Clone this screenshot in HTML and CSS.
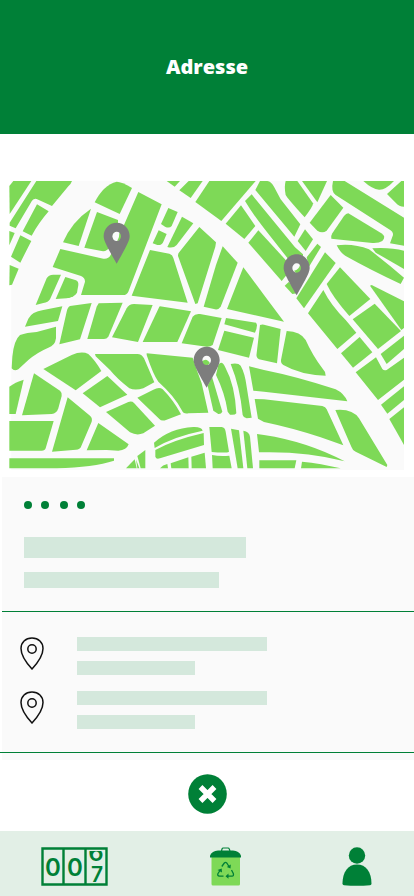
FILE: index.html
```html
<!DOCTYPE html>
<html lang="de">
<head>
<meta charset="utf-8">
<meta name="viewport" content="width=device-width, initial-scale=1">
<title>Adresse</title>
<link rel="stylesheet" href="styles.css">
</head>
<body>
<header class="header"><h1 class="title">Adresse</h1></header>
<main class="main">
<svg class="map" viewBox="27 30 1188 870" role="img" aria-label="Map">
<defs><path id="pin" fill-rule="evenodd" d="M0 -40C-22 -40 -39 -22 -39 0C-39 14 -30 30 0 83C30 30 39 14 39 0C39 -22 22 -40 0 -40ZM0 -13A13 14 0 1 1 0 15A13 14 0 1 1 0 -13Z"/></defs>
<path class="ground" d="M34 32H1212V900H34Z"/>
<g class="blocks">
<g>
<path d="M28 48L40 33H94L29 132Z"/>
<path d="M109 33H216Q213 42 205 49L156 108L110 87Q100 84 95 94L47 175L29 167V158Z"/>
<path d="M111 103L146 124Q115 160 95 197L68 184Z"/>
<path d="M28 183L44 189L28 226Z"/>
<path d="M61 196L94 213Q75 250 61 278L33 260Z"/>
<path d="M29 285L56 296L36 344L28 346Z"/>
<path d="M284 97Q310 45 350 35Q365 35 396 54L359 132Z"/>
<path d="M189 217Q215 155 273 116L236 228Z"/>
<path d="M291 126L354 150V165L330 230Q320 246 305 243L253 233Z"/>
<path d="M415 66L485 103L385 365Q380 375 370 375H243L255 335Q255 323 243 318L158 291L181 237L310 266Q325 268 332 255L372 165Z"/>
<path d="M107 405L140 325Q145 315 160 314H183L150 388Q145 397 130 399Z"/>
<path d="M196 321L228 331Q236 335 235 345L231 368Q225 380 200 385L167 387Z"/>
<path d="M85 446Q95 425 130 420L187 409L174 453L75 470Z"/>
<path d="M210 408L275 399L240 508L178 523L200 425Q203 411 210 408Z"/>
<path d="M296 400L368 398L325 500Q320 507 312 507H262L290 410Z"/>
<path d="M458 405L414 516L336 502L380 415Q387 402 402 402Z"/>
</g>
<g transform="translate(390 0)">
<path d="M110 33H150L134 50Z"/>
<path d="M176 33H218L182 84L148 61Z"/>
<path d="M238 33H377L274 153L196 96Z"/>
<path d="M333 106L376 168L343 207L287 161Z"/>
<path d="M115 114L143 126L125 168Q118 176 105 170L93 162Z"/>
<path d="M86 181L110 192L100 215Q95 227 82 225L68 220Z"/>
<path d="M156 140L190 160L140 225Q130 236 112 231Z"/>
<path d="M208 171L258 217L256 230L203 400L196 402L144 258Q143 250 150 244Z"/>
<path d="M278 229L323 278L272 410Q265 420 255 418L221 410L258 285Z"/>
<path d="M340 292Q380 345 402 375L462 455L291 417Z"/>
<path d="M60 240L118 251Q127 254 130 264L173 398L5 377Z"/>
<path d="M90 409L183 424L142 516H38L88 410Z"/>
<path d="M188 440Q195 430 210 432L275 444L248 525Q240 531 230 530L155 520Z"/>
<path d="M288 444L378 458Q385 465 375 488L283 463Z"/>
</g>
<g transform="translate(792 0)">
<path d="M-12 33H10Q22 35 30 50L50 88L109 163L91 200L-26 60Z"/>
<path d="M-37 73L93 232L117 253V280L75 270L0 175Q-35 130 -57 93Z"/>
<path d="M-17 181L67 272V316L53 333L-47 218Z"/>
<path d="M65 33H100L147 100Q148 108 122 142Q70 85 65 75Q60 50 65 33Z"/>
<path d="M114 33H189L160 97Z"/>
<path d="M207 33H242L420 143V227L378 220L387 195Q388 185 375 178L215 75Q200 65 207 33Z"/>
<path d="M298 33H390Q365 60 345 59Q325 58 298 33Z"/>
<path d="M420 33V110Q405 110 395 98L369 72L412 33Z"/>
<path d="M200 75L238 113L188 182Q175 192 160 182L137 158Z"/>
<path d="M253 130L352 190Q368 200 355 213Q345 220 325 219L202 206Q200 198 205 190L240 138Q246 130 253 130Z"/>
<path d="M123 178L147 208L125 243L101 213Z"/>
<path d="M160 221L171 231L135 290L128 262Z"/>
<path d="M183 247L215 279L120 415L97 385Z"/>
<path d="M218 226Q270 220 315 238Q370 280 420 323L410 342Q320 300 245 258Q230 250 218 226Z"/>
<path d="M325 235Q380 232 420 242V297L335 248Z"/>
<path d="M228 292L319 387L256 438Q205 380 188 342Z"/>
<path d="M318 347L323 345L420 394V474L412 480Z"/>
<path d="M178 360Q200 405 245 450L277 488L220 537L132 430Z"/>
<path d="M332 401L411 483L342 537L266 448Z"/>
<path d="M75 335L100 370L85 372L62 347Z"/>
</g>
<g transform="translate(0 450)">
<path d="M60 45Q80 38 110 36L168 20V55Q165 78 145 83Q110 98 85 120L55 148Q42 155 35 145L37 110Q42 60 60 45Z"/>
<path d="M130 147L215 105Q245 92 265 102Q285 120 304 153L227 211Z"/>
<path d="M285 102H412Q425 102 432 115L463 187L430 205Q405 212 388 205Q350 175 330 150L287 109Z"/>
<path d="M28 200Q45 187 71 179L47 282H28Z"/>
<path d="M102 160L180 212Q187 218 185 228L175 265Q170 281 155 282L66 286Z"/>
<path d="M322 168L382 224L300 262L248 220Z"/>
<path d="M318 276L385 246Q395 242 402 249L465 317L430 340Q410 348 390 337Z"/>
<path d="M203 232L270 287Q278 293 275 305L243 380Q240 388 228 389L156 395Z"/>
<path d="M295 309L386 373Q380 390 355 392L320 390L260 391Z"/>
<path d="M28 303H161L137 385Q135 392 125 392H28Z"/>
<path d="M28 415H342V422Q280 442 170 445H28Z"/>
<path d="M378 445L404 418L410 445Z"/>
</g>
<g transform="translate(390 450)">
<path d="M50 100L188 113Q200 150 215 190L235 278L175 280Q160 283 155 270Q135 230 85 185Q70 165 50 105Z"/>
<path d="M22 233L70 209Q88 200 98 208Q130 240 153 283L110 299Q95 305 88 297Z"/>
<path d="M22 408L46 390V445H32Z"/>
<path d="M18 418L28 445H22Z"/>
<path d="M233 197L246 170L277 275Q273 283 265 282L250 272Z"/>
<path d="M265 135Q275 120 285 140Q315 195 319 280Q315 286 300 284L293 275Q285 220 258 165Z"/>
<path d="M302 132Q325 128 332 137Q345 160 350 200L365 293L350 295Q340 293 338 285Q330 200 302 132Z"/>
<path d="M283 32L372 53L357 113L264 90Z"/>
<path d="M72 368Q120 325 190 321Q215 320 218 332Q130 350 74 384Z"/>
<path d="M76 390Q130 360 221 339L222 375L90 415Q78 419 76 410Z"/>
<path d="M90 445Q98 435 112 432L114 445Z"/>
<path d="M122 430L175 412L176 445H124Z"/>
<path d="M184 410L224 398L228 445H185Z"/>
<path d="M238 321H275Q285 322 287 335L297 395Q290 400 245 396Z"/>
<path d="M246 405Q270 410 298 407L305 445H248Z"/>
<path d="M303 326L327 331L340 445H323Z"/>
<path d="M340 332Q358 335 360 350L369 445H352Z"/>
</g>
<g transform="translate(792 450)">
<path d="M-12 15Q-5 12 0 14L50 27L39 130L-15 118Q-25 112 -22 100Z"/>
<path d="M-45 139L0 150Q100 170 215 208Q240 220 250 244L0 215L-32 212Z"/>
<path d="M-28 237L0 238L175 258Q185 260 188 268L238 376L170 352Q90 325 0 306L-18 296Z"/>
<path d="M-21 342L0 345Q130 365 242 424Q130 395 0 397L-15 397Z"/>
<path d="M-14 421H97L92 445H-14Z"/>
<path d="M114 425Q170 430 230 445H111Z"/>
<path d="M214 270Q265 265 285 295L370 435L368 441L275 395Q265 390 262 380Z"/>
<path d="M68 33Q110 35 125 60Q145 105 175 145Q185 155 185 167Q110 165 58 135Q50 130 51 120Z"/>
<path d="M287 51L325 97L267 143L231 100Z"/>
<path d="M350 102L420 47V87L368 132Z"/>
<path d="M336 112L355 147Q360 153 368 150L420 113V179L342 240L275 157Z"/>
<path d="M420 199V240L370 281L351 254Z"/>
<path d="M420 262V375L376 297Z"/>
</g>
</g>
<g class="ground">
<circle cx="350" cy="199" r="14"/>
<circle cx="890" cy="294" r="14"/>
<circle cx="620" cy="571" r="14"/>
</g>
<g class="blocks">
<path d="M358 188Q359 200 352 212H366V190Z"/>
<path d="M900 284Q898 298 882 302L888 309H904V286Z"/>
<path d="M606 574Q620 562 630 580L622 586H606Z"/>
</g>
<g class="pins">
<use href="#pin" x="350" y="198"/>
<use href="#pin" x="890" y="293"/>
<use href="#pin" x="620" y="570"/>
</g>
</svg>
<div class="panel">
<section class="summary">
<div class="dots"><span class="pair"><i class="dot"></i><i class="dot"></i></span><span class="pair"><i class="dot"></i><i class="dot"></i></span></div>
<div class="bar bar-title"></div>
<div class="bar bar-subtitle"></div>
</section>
<ul class="places">
<li class="place">
<svg class="place-icon" viewBox="0 0 24 33" aria-hidden="true"><path d="M12 1C5.500 1 1 5.500 1 11.500C1 18 6 25.500 12 32C18 25.500 23 18 23 11.500C23 5.500 18.500 1 12 1Z"/><circle cx="12" cy="12" r="4.200"/></svg>
<div class="lines"><div class="bar bar-long"></div><div class="bar bar-short"></div></div>
</li>
<li class="place">
<svg class="place-icon" viewBox="0 0 24 33" aria-hidden="true"><path d="M12 1C5.500 1 1 5.500 1 11.500C1 18 6 25.500 12 32C18 25.500 23 18 23 11.500C23 5.500 18.500 1 12 1Z"/><circle cx="12" cy="12" r="4.200"/></svg>
<div class="lines"><div class="bar bar-long"></div><div class="bar bar-short"></div></div>
</li>
</ul>
</div>
<div class="actions">
<button class="close" type="button" aria-label="Close"><svg viewBox="0 0 39 40" aria-hidden="true"><ellipse cx="19.500" cy="20" rx="19.300" ry="19.800" fill="#008037"/><path d="M12.500 13L26.500 27M26.500 13L12.500 27" stroke="#fff" stroke-width="5.400"/></svg></button>
</div>
</main>
<nav class="nav">
<a class="nav-link" href="#counter" aria-label="Counter">
<svg class="icon-counter" viewBox="0 0 67 39" aria-hidden="true">
<defs><clipPath id="reel"><path d="M46 4H63V36H46Z"/></clipPath></defs>
<path d="M1.500 1.500H65.500V37.500H1.500ZM22.500 1V38M44.500 1V38" fill="none" stroke="#008037" stroke-width="2.400"/>
<g class="digits"><text x="12" y="29">0</text><text x="34" y="29">0</text><g clip-path="url(#reel)"><text x="55" y="14">6</text></g><text class="digit-small" x="56" y="35">7</text></g>
</svg>
</a>
<a class="nav-link" href="#recycling" aria-label="Recycling">
<svg class="icon-bin" viewBox="0 0 31 39" aria-hidden="true">
<path d="M1.500 10H30V37Q30 38.500 28.500 38.500H3Q1.500 38.500 1.500 37Z" fill="#7ed957"/>
<path d="M0 10.500V8.500Q2 4 8 3.500H23Q29 4 31 8.500V10.500Z" fill="#008037"/>
<path d="M11.500 4L12 2Q12.300 1 13.300 1H18Q19 1 19.300 2L20 4" fill="none" stroke="#008037" stroke-width="1.200"/>
<g fill="none" stroke="#008037" stroke-width="1.300"><path d="M11.800 19.500L14.300 16Q15.500 14.800 16.700 16L19 19.500"/><path d="M21.500 23L23.300 26.500Q24 29 22 29.200H17.500"/><path d="M13.500 29.200H9.500Q7 28.800 8 26.500L10 23.500"/></g>
<path d="M20.800 17.500L20.500 21.500L16.800 20ZM18.500 26.600V31.800L15.500 29.200ZM7.500 23L11.700 21.500L12 25.500Z" fill="#008037"/>
</svg>
</a>
<a class="nav-link" href="#profile" aria-label="Profile">
<svg class="icon-user" viewBox="0 0 30 39" aria-hidden="true"><circle cx="15" cy="8.500" r="8.200"/><path d="M.500 36.500C.500 25 6 17.500 15 17.500S29.500 25 29.500 36.500Q29.500 38 28 38.200Q15 39.400 2 38.200Q.500 38 .500 36.500Z"/></svg>
</a>
</nav>
</body>
</html>
```
FILE: styles.css
```css
* {
  box-sizing: border-box;
}

body {
  margin: 0;
  min-height: 100vh;
  display: flex;
  flex-direction: column;
  background: #fff;
  font-family: "Open Sans", sans-serif;
}

.header {
  height: 134px;
  display: flex;
  align-items: center;
  justify-content: center;
  background: #008037;
}

.title {
  margin: 0;
  color: #fff;
  font-size: 20px;
  line-height: 28px;
  font-weight: 800;
}

.main {
  flex: 1;
  display: flex;
  flex-direction: column;
  padding-top: 46px;
}

.map {
  display: block;
  margin: 0 9px;
}

.ground {
  fill: #fafafa;
}

.blocks {
  fill: #7ed957;
}

.pins {
  fill: #7d7d7d;
}

.panel {
  margin-top: 7px;
  padding-bottom: 7px;
  background: linear-gradient(#fafafa, #fafafa) 2px 0 no-repeat;
}

.summary {
  margin-left: 2px;
  padding: 24px 22px 23px;
  border-bottom: 1px solid #008037;
}

.dots {
  display: flex;
  gap: 11px;
  margin-bottom: 28px;
}

.pair {
  display: flex;
  gap: 9px;
}

.dot {
  width: 8px;
  height: 8px;
  border-radius: 50%;
  background: #008037;
}

.bar {
  max-width: 100%;
  height: 14px;
  background: #d4e8dc;
}

.bar-title {
  width: 222px;
  height: 21px;
  margin-bottom: 14px;
}

.bar-subtitle {
  width: 195px;
  height: 16px;
}

.places {
  margin: 0;
  padding: 25px 20px 23px;
  display: flex;
  flex-direction: column;
  gap: 16px;
  list-style: none;
  border-bottom: 1px solid #008037;
}

.place {
  display: flex;
  gap: 33px;
}

.place-icon {
  width: 24px;
  height: 33px;
  fill: none;
  stroke: #111;
  stroke-width: 1.5;
}

.lines {
  flex: 1;
  display: flex;
  flex-direction: column;
  gap: 10px;
}

.bar-long {
  width: 190px;
}

.bar-short {
  width: 118px;
}

.actions {
  flex: 1;
  display: flex;
  align-items: center;
  justify-content: center;
  padding-bottom: 4px;
}

.close {
  width: 39px;
  height: 40px;
  padding: 0;
  border: 0;
  background: none;
}

.close svg {
  display: block;
}

.nav {
  height: 65px;
  padding: 5px 42px 0 41px;
  display: flex;
  align-items: center;
  justify-content: space-between;
  background: #e2efe6;
}

.nav-link svg {
  display: block;
  height: 39px;
}

.icon-counter {
  width: 67px;
}

.icon-bin {
  width: 31px;
}

.icon-user {
  width: 30px;
  fill: #008037;
}

.digits {
  fill: #008037;
  font-family: Inter, sans-serif;
  font-size: 24px;
  font-weight: 600;
  text-anchor: middle;
}

.digit-small {
  font-size: 21px;
}
```
